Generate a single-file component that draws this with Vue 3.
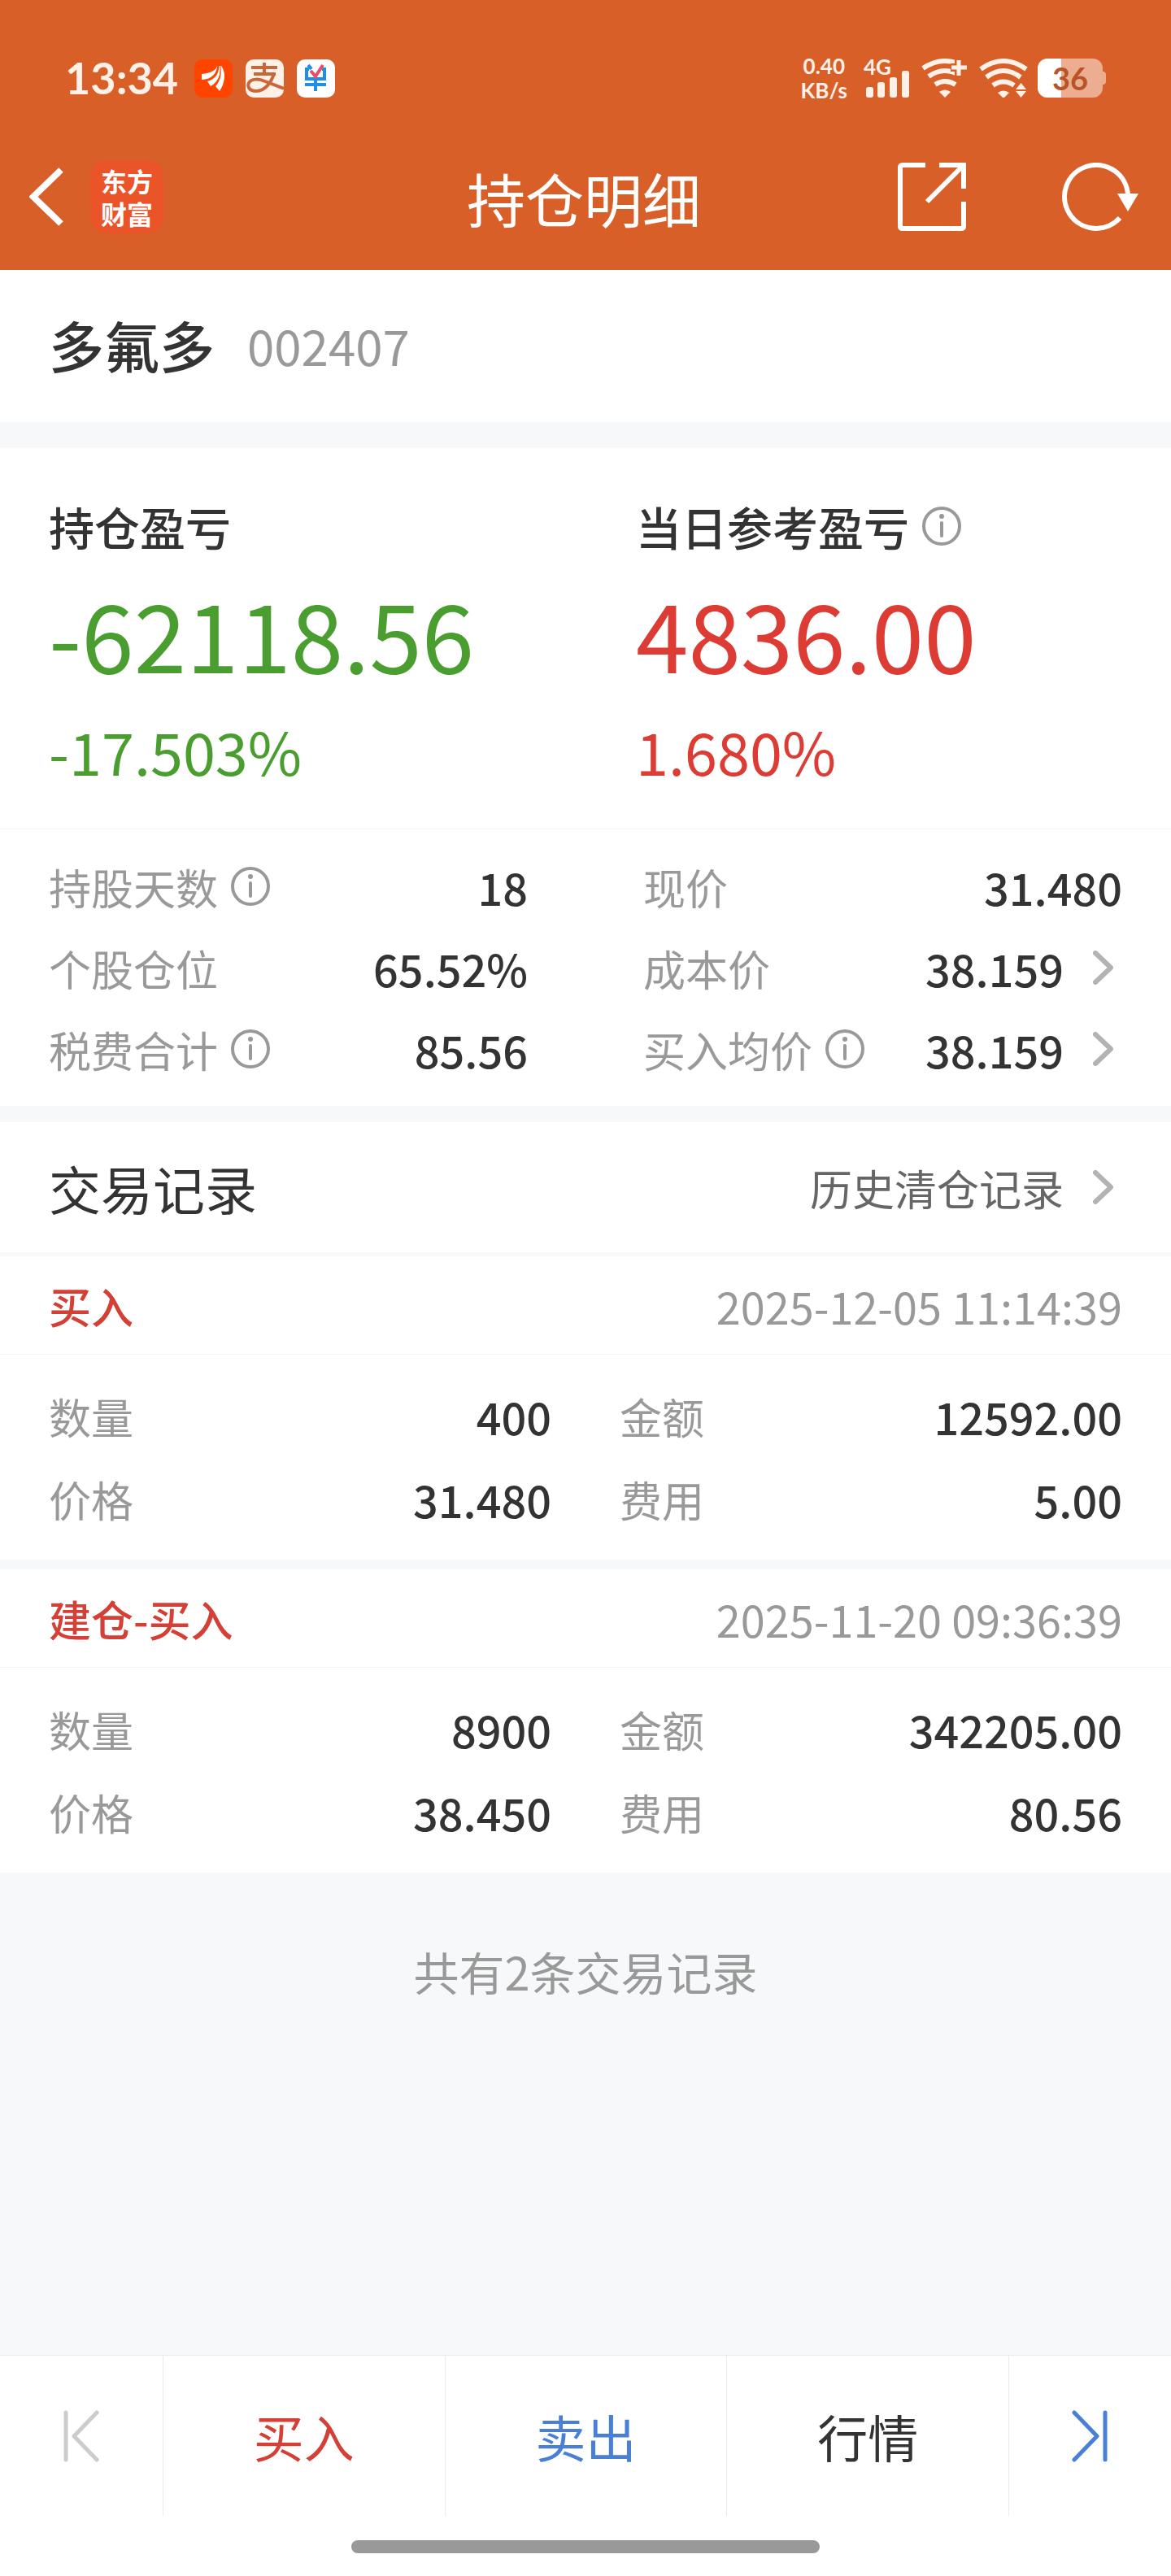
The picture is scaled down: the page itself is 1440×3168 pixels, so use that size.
<template>
    <div class="page">
        <header class="top">
            <div class="status-bar">
                <div class="status-left">
                    <span class="time">13:34</span>
                    <svg class="app-icon" viewBox="0 0 47 47">
                        <rect width="47" height="47" rx="10" fill="#ff4400" />
                        <g fill="#fff">
                            <path d="M28 8C28 17 21 25 9 25L9 18C18 17 26 15 28 8Z" />
                            <path d="M31 8C33 19 29 28 20 33L16 27C25 25 31 17 30 8Z" />
                            <path d="M33 8C40 17 37 30 31 39L26 33C32 27 34 17 32 8Z" />
                        </g>
                    </svg>
                    <svg class="app-icon" viewBox="0 0 47 47">
                        <rect width="47" height="47" rx="10" fill="#fff0e8" />
                        <g fill="none" stroke="#c9673a" stroke-width="4">
                            <path d="M23 4V18M7 10H39M10 18H37" />
                            <path d="M35 17C32 28 24 39 13 39C4 39 2 33 4 29C7 23 17 24 24 27L47 36" />
                        </g>
                    </svg>
                    <svg class="app-icon" viewBox="0 0 47 47">
                        <rect width="47" height="47" rx="10" fill="#fff" />
                        <g fill="none" stroke="#1e8fe6" stroke-width="4">
                            <path d="M15 12H12V24H34V12H31M14 7L18 12M10 31H36M23 25V39" />
                            <path d="M17 14L23 21L32 7" stroke="#ea4c68" />
                        </g>
                    </svg>
                </div>
                <div class="status-right">
                    <div class="speed"><span>0.40</span><span>KB/s</span></div>
                    <div class="signal">
                        <span class="network">4G</span>
                        <svg width="56" height="48" viewBox="0 0 56 48" fill="#fff0e8">
                            <rect x="3" y="35" width="9" height="13" rx="3" />
                            <rect x="17" y="29" width="9" height="19" rx="3" />
                            <rect x="32" y="23" width="9" height="25" rx="3" />
                            <rect x="47" y="15" width="9" height="33" rx="3" />
                        </svg>
                    </div>
                    <svg class="wifi" width="57" height="48" viewBox="0 0 57 48">
                        <path class="arc" d="M2 12Q29 -6 56 12M9 22Q29 8 49 22M17 32Q29 24 42 32" />
                        <path class="solid" d="M22 41Q29 36 36 41L29 48Z" />
                        <path d="M41 0H57V24H41V16H36V6H41Z" fill="#d85f28" />
                        <path class="arc plus" d="M46 2V21M37 11H56" />
                    </svg>
                    <svg class="wifi second" width="60" height="48" viewBox="0 0 60 48">
                        <path class="arc" d="M2 13Q30 -7 58 13M9 23Q30 7 51 23M17 33Q30 24 43 33" />
                        <path class="solid" d="M23 42Q30 37 37 42L30 49Z" />
                        <path class="solid" d="M45 38L51.500 30L58 38ZM45 40L51.500 48L58 40Z" />
                    </svg>
                    <div class="battery"><span>36</span></div>
                </div>
            </div>
            <nav class="title-bar">
                <div class="title-left">
                    <button type="button" aria-label="返回">
                        <svg width="43" height="72" viewBox="0 0 43 72">
                            <path d="M39 3L5 36L39 69" fill="none" stroke="#fff" stroke-width="8" />
                        </svg>
                    </button>
                    <div class="logo"><span>东方</span><span>财富</span></div>
                </div>
                <h1>持仓明细</h1>
                <div class="title-right">
                    <button type="button" aria-label="分享">
                        <svg width="84" height="84" viewBox="0 0 84 84" fill="none" stroke="#fff" stroke-width="6">
                            <path d="M34 3H6Q3 3 3 6V78Q3 81 6 81H78Q81 81 81 78V48" />
                            <path d="M51 3H81V32M80 4L36 48" />
                        </svg>
                    </button>
                    <button type="button" aria-label="刷新">
                        <svg width="94" height="84" viewBox="0 0 94 84">
                            <path d="M81 40A39 39 0 1 0 71 68" fill="none" stroke="#fff" stroke-width="6" />
                            <path d="M68 38H94L81 60Z" fill="#fff" />
                        </svg>
                    </button>
                </div>
            </nav>
        </header>

        <section class="stock">
            <h2>{{ stock.name }}</h2>
            <span>{{ stock.code }}</span>
        </section>

        <section class="profit">
            <div v-for="item in profits" :key="item.label" :class="item.trend">
                <div class="profit-label">
                    {{ item.label }}
                    <button v-if="item.info" type="button" class="info" :aria-label="item.label + '说明'">
                        <svg viewBox="0 0 48 48"><circle cx="24" cy="24" r="22" /><path d="M24 20V36" /><circle class="dot" cx="24" cy="12" r="3" /></svg>
                    </button>
                </div>
                <div class="profit-amount">{{ item.amount }}</div>
                <div class="profit-rate">{{ item.rate }}</div>
            </div>
        </section>

        <dl class="details">
            <div v-for="row in details" :key="row.label" class="row">
                <dt>
                    {{ row.label }}
                    <button v-if="row.info" type="button" class="info" :aria-label="row.label + '说明'">
                        <svg viewBox="0 0 48 48"><circle cx="24" cy="24" r="22" /><path d="M24 20V36" /><circle class="dot" cx="24" cy="12" r="3" /></svg>
                    </button>
                </dt>
                <dd>
                    {{ row.value }}
                    <svg v-if="row.more" class="more" viewBox="0 0 36 42"><path d="M3 3L22 21L3 39" /></svg>
                </dd>
            </div>
        </dl>

        <section class="records">
            <div class="records-head">
                <h2>交易记录</h2>
                <a href="#">
                    历史清仓记录
                    <svg class="more" viewBox="0 0 36 42"><path d="M3 3L22 21L3 39" /></svg>
                </a>
            </div>
            <article v-for="record in records" :key="record.time" class="record">
                <div class="record-head">
                    <strong>{{ record.type }}</strong>
                    <time>{{ record.time }}</time>
                </div>
                <dl>
                    <div v-for="field in record.fields" :key="field[0]" class="row">
                        <dt>{{ field[0] }}</dt>
                        <dd>{{ field[1] }}</dd>
                    </div>
                </dl>
            </article>
        </section>

        <p class="total">共有{{ records.length }}条交易记录</p>

        <footer class="bottom">
            <div class="actions">
                <button type="button" disabled aria-label="上一只">
                    <svg width="44" height="64" viewBox="0 0 44 64" stroke="#ccc"><path d="M3 3V61M41 3L13 32L41 61" /></svg>
                </button>
                <button type="button" class="buy">买入</button>
                <button type="button" class="sell">卖出</button>
                <button type="button">行情</button>
                <button type="button" aria-label="下一只">
                    <svg width="44" height="64" viewBox="0 0 44 64" stroke="#4a7fd6"><path d="M41 3V61M3 3L31 32L3 61" /></svg>
                </button>
            </div>
            <div class="home-bar"></div>
        </footer>
    </div>
</template>

<script setup>
import { ref } from 'vue';

const stock = ref({ name: '多氟多', code: '002407' });

const profits = ref([
    { label: '持仓盈亏', amount: '-62118.56', rate: '-17.503%', trend: 'down' },
    { label: '当日参考盈亏', amount: '4836.00', rate: '1.680%', trend: 'up', info: true }
]);

const details = ref([
    { label: '持股天数', value: '18', info: true },
    { label: '现价', value: '31.480' },
    { label: '个股仓位', value: '65.52%' },
    { label: '成本价', value: '38.159', more: true },
    { label: '税费合计', value: '85.56', info: true },
    { label: '买入均价', value: '38.159', info: true, more: true }
]);

const records = ref([
    {
        type: '买入',
        time: '2025-12-05 11:14:39',
        fields: [['数量', '400'], ['金额', '12592.00'], ['价格', '31.480'], ['费用', '5.00']]
    },
    {
        type: '建仓-买入',
        time: '2025-11-20 09:36:39',
        fields: [['数量', '8900'], ['金额', '342205.00'], ['价格', '38.450'], ['费用', '80.56']]
    }
]);
</script>

<style>
    body {
        margin: 0;
        background: #f6f8fa;
    }
</style>

<style scoped>
    .page {
        display: flex;
        flex-direction: column;
        min-height: 100vh;
        background: #f6f8fa;
        color: #333;
        font-family: 'Noto Sans CJK SC', sans-serif;
        font-size: 52px;
    }
    h1, h2, p, dl, dd {
        margin: 0;
        font-weight: 400;
    }
    button {
        display: flex;
        align-items: center;
        justify-content: center;
        padding: 0;
        border: none;
        background: none;
        color: inherit;
        font: inherit;
    }
    svg {
        display: block;
        flex: none;
    }

    /* header */
    .top {
        background: #d85f28;
        color: #fff;
    }
    .status-bar {
        display: flex;
        align-items: center;
        justify-content: space-between;
        box-sizing: border-box;
        height: 152px;
        padding: 40px 84px 0 80px;
        color: #fff0e8;
        font-family: Lato, 'Noto Sans CJK SC', sans-serif;
        font-weight: 700;
    }
    .status-left, .status-right {
        display: flex;
        align-items: center;
    }
    .status-left {
        gap: 16px;
    }
    .time {
        margin-right: 4px;
        font-size: 54px;
        line-height: 56px;
    }
    .app-icon {
        width: 47px;
        height: 47px;
    }
    .speed {
        display: flex;
        flex-direction: column;
        align-items: center;
        margin-right: 20px;
        font-size: 26px;
        line-height: 30px;
    }
    .signal {
        position: relative;
        margin-right: 15px;
    }
    .network {
        position: absolute;
        top: 0;
        left: 0;
        font-size: 26px;
        line-height: 20px;
    }
    .wifi {
        margin-right: 14px;
    }
    .wifi.second {
        margin-right: 12px;
    }
    .wifi .arc {
        fill: none;
        stroke: #fff0e8;
        stroke-width: 6;
    }
    .wifi .plus {
        stroke-width: 5;
    }
    .wifi .solid {
        fill: #fff0e8;
    }
    .battery {
        position: relative;
        width: 80px;
        border-radius: 12px;
        background: linear-gradient(to right, #fff 36%, #edad91 36%);
        color: #b85426;
        font-size: 38px;
        line-height: 48px;
        text-align: center;
    }
    .battery::after {
        content: '';
        position: absolute;
        top: 16px;
        right: -4px;
        width: 4px;
        height: 16px;
        border-radius: 0 4px 4px 0;
        background: #edad91;
    }
    .title-bar {
        display: grid;
        grid-template-columns: 1fr auto 1fr;
        align-items: center;
        height: 180px;
        padding: 0 40px 0 36px;
    }
    .title-left {
        display: flex;
        align-items: center;
        gap: 32px;
    }
    .title-right {
        display: flex;
        justify-content: flex-end;
        gap: 118px;
    }
    .logo {
        display: flex;
        flex-direction: column;
        align-items: center;
        justify-content: center;
        width: 90px;
        height: 90px;
        border-radius: 20px;
        background: #ea5428;
        font-size: 32px;
        font-weight: 700;
        line-height: 40px;
    }
    h1 {
        font-size: 72px;
    }

    /* stock name */
    .stock {
        display: flex;
        align-items: center;
        gap: 40px;
        box-sizing: border-box;
        height: 187px;
        padding: 0 60px 4px;
        background: #fff;
    }
    .stock h2 {
        font-size: 68px;
        font-weight: 500;
    }
    .stock span {
        color: #999;
        font-size: 60px;
    }

    /* profit and loss */
    .profit {
        display: grid;
        grid-template-columns: 1fr 1fr;
        column-gap: 124px;
        margin-top: 32px;
        padding: 56px 60px 52px;
        border-bottom: 1px solid #f4f5f6;
        background: #fff;
    }
    .profit-label {
        display: flex;
        align-items: center;
        gap: 16px;
        color: #333;
        font-size: 56px;
        font-weight: 500;
        line-height: 80px;
        white-space: nowrap;
    }
    .profit-amount {
        margin-top: 20px;
        font-size: 116px;
        line-height: 140px;
    }
    .profit-rate {
        margin-top: 32px;
        font-size: 72px;
        line-height: 88px;
    }
    .down {
        color: #4a9e30;
    }
    .up {
        color: #dc3c34;
    }
    .info svg {
        width: 48px;
        height: 48px;
        fill: none;
        stroke: #999;
        stroke-width: 4;
        stroke-linecap: round;
    }
    .info .dot {
        fill: #999;
        stroke: none;
    }
    .more {
        width: 36px;
        height: 42px;
        fill: none;
        stroke: #b3b3b3;
        stroke-width: 6;
        stroke-linecap: round;
        stroke-linejoin: round;
    }

    /* label and value rows */
    .row {
        display: flex;
        align-items: center;
        justify-content: space-between;
        height: 100px;
    }
    .row dt {
        display: flex;
        align-items: center;
        gap: 16px;
        color: #999;
    }
    .row dd {
        display: flex;
        align-items: center;
        gap: 36px;
        font-size: 54px;
        font-weight: 500;
    }
    .details {
        display: grid;
        grid-template-columns: 1fr 1fr;
        column-gap: 142px;
        padding: 20px 60px;
        background: #fff;
    }

    /* trade records */
    .records {
        margin-top: 20px;
    }
    .records-head {
        display: flex;
        align-items: center;
        justify-content: space-between;
        height: 160px;
        margin-bottom: 5px;
        padding: 0 60px;
        background: #fff;
    }
    .records-head h2 {
        font-size: 64px;
    }
    .records-head a {
        display: flex;
        align-items: center;
        gap: 36px;
        color: #666;
        text-decoration: none;
    }
    .record {
        background: #fff;
    }
    .record + .record {
        margin-top: 12px;
    }
    .record-head {
        display: flex;
        align-items: center;
        justify-content: space-between;
        height: 120px;
        padding: 0 60px;
        border-bottom: 1px solid #f4f5f6;
    }
    .record-head strong {
        color: #d43f36;
        font-weight: 500;
    }
    .record-head time {
        color: #999;
        font-size: 54px;
    }
    .record dl {
        display: grid;
        grid-template-columns: 1fr 1fr;
        column-gap: 84px;
        padding: 24px 60px;
    }
    .record .row {
        height: 102px;
    }
    .total {
        padding: 73px 0;
        color: #999;
        font-size: 56px;
        line-height: 96px;
        text-align: center;
    }

    /* bottom bar */
    .bottom {
        margin-top: auto;
        border-top: 1px solid #e8e9eb;
        background: #fff;
    }
    .actions {
        display: grid;
        grid-template-columns: 200px 1fr 1fr 1fr 200px;
        height: 197px;
    }
    .actions button {
        font-size: 62px;
    }
    .actions button + button {
        border-left: 1px solid #ebebeb;
    }
    .actions svg {
        fill: none;
        stroke-width: 5;
        stroke-linecap: round;
        stroke-linejoin: round;
    }
    .actions .buy {
        color: #d43f36;
    }
    .actions .sell {
        color: #4a7fd6;
    }
    .home-bar {
        width: 40%;
        height: 16px;
        margin: 30px auto 28px;
        border-radius: 8px;
        background: #999;
    }
</style>
